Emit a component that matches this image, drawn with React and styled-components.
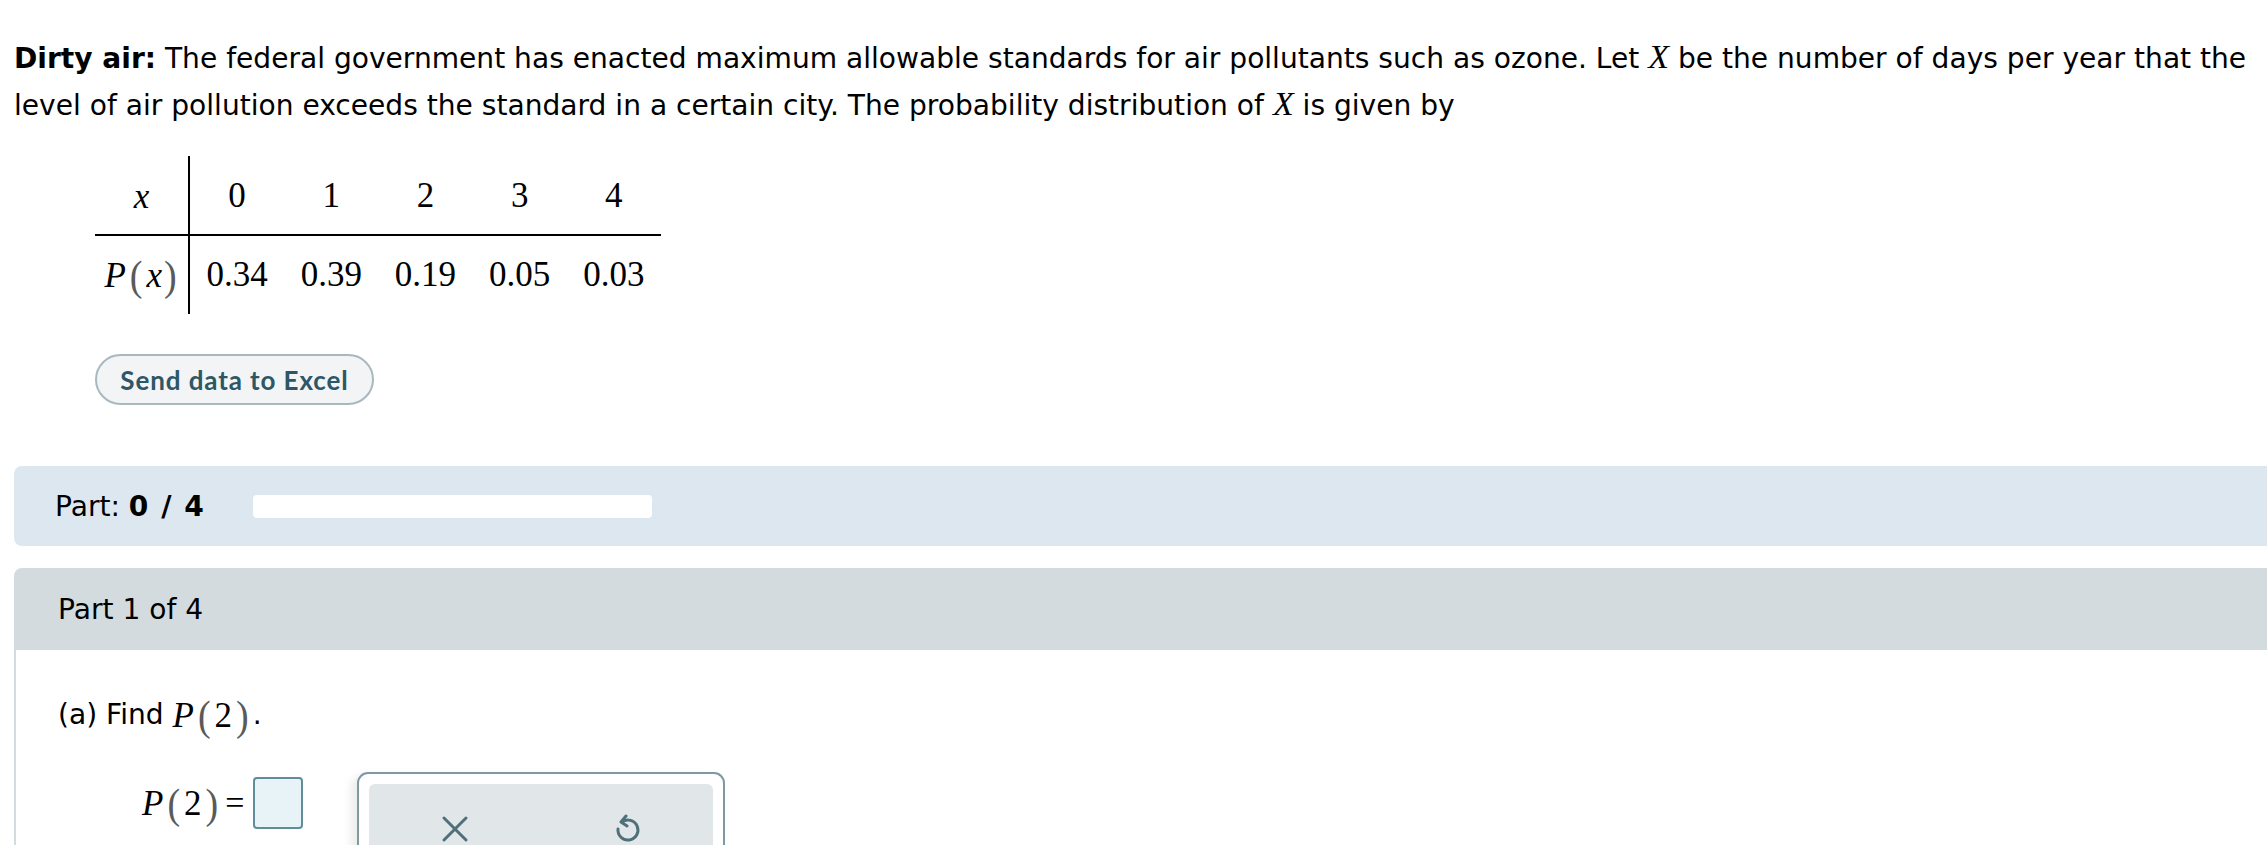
import React from "react";
import styled, { createGlobalStyle } from "styled-components";

const Global = createGlobalStyle`
  html, body { margin: 0; padding: 0; background: #fff; overflow: hidden; }
  body { font-family: "DejaVu Sans", Verdana, sans-serif; color: #000; }
`;

const Page = styled.div`
  padding: 35px 0 0 14px;
  width: 2267px;
  box-sizing: border-box;
`;

const Intro = styled.p`
  margin: 0;
  padding-right: 0;
  font-size: 28.1px;
  line-height: 47px;
`;

const Serif = styled.span`
  font-family: "Liberation Serif", "Times New Roman", serif;
  font-style: ${(p) => (p.$italic ? "italic" : "normal")};
  font-size: ${(p) => p.$size || 34}px;
  line-height: 1;
`;

const Paren = styled.span`
  font-family: "Liberation Serif", serif;
  font-style: normal;
  color: #5a5a5a;
  font-size: ${(p) => p.$size || 36}px;
  line-height: 1;
  display: inline-block;
  transform: scaleY(1.12);
  margin: 0 ${(p) => (p.$gap != null ? p.$gap : 3)}px;
`;

const TableWrap = styled.div`
  margin: 27px 0 0 81px;
  display: grid;
  grid-template-columns: 95px repeat(5, 94.2px);
  width: max-content;
`;

const Cell = styled.div`
  height: ${(p) => (p.$top ? 80 : 78)}px;
  display: flex;
  align-items: center;
  justify-content: center;
  font-family: "Liberation Serif", "Times New Roman", serif;
  font-size: 35px;
  box-sizing: border-box;
  border-right: ${(p) => (p.$head ? "2px solid #000" : "none")};
  border-bottom: ${(p) => (p.$top ? "2px solid #000" : "none")};
  padding-top: ${(p) => (p.$top ? 2 : 0)}px;
`;

const Button = styled.button`
  margin: 40px 0 0 81px;
  width: 279px;
  height: 51px;
  border-radius: 26px;
  border: 2px solid #a9b8bf;
  background: #f2f4f6;
  color: #2e5766;
  font-family: Lato, "Open Sans", sans-serif;
  font-weight: 700;
  font-size: 26px;
  letter-spacing: 0.9px;
  padding: 0;
  display: block;
`;

const PartBar = styled.div`
  margin-top: 61px;
  height: 80px;
  background: #dde7ef;
  border-radius: 8px 0 0 8px;
  display: flex;
  align-items: center;
  padding-left: 41px;
  font-size: 28.1px;
`;

const PartLabel = styled.span`
  width: 198px;
  white-space: nowrap;
`;

const PartCount = styled.b`
  letter-spacing: 1.5px;
`;

const Progress = styled.div`
  width: 399px;
  height: 23px;
  background: #fff;
  border-radius: 4px;
`;

const Section = styled.div`
  margin-top: 22px;
`;

const SectionHead = styled.div`
  height: 82px;
  background: #d3dbde;
  border-radius: 8px 0 0 0;
  display: flex;
  align-items: center;
  padding-left: 44px;
  font-size: 28.1px;
`;

const SectionBody = styled.div`
  border-left: 2px solid #d3dbde;
  padding: 40px 0 0 42px;
  height: 300px;
`;

const Question = styled.div`
  font-size: 28.1px;
  line-height: 50px;
  height: 50px;
  display: flex;
  align-items: center;
  white-space: pre;
`;

const AnswerRow = styled.div`
  margin-top: 32px;
  display: flex;
  align-items: flex-start;
`;

const Equation = styled.div`
  margin: 5px 0 0 84px;
  display: flex;
  align-items: center;
  height: 52px;
`;

const Equals = styled.span`
  font-family: "Liberation Serif", serif;
  font-size: 34px;
  margin-left: 3px;
`;

const Input = styled.div`
  margin-left: 9px;
  width: 50px;
  height: 52px;
  box-sizing: border-box;
  border: 2px solid #5f8e9a;
  background: #e8f3f8;
  border-radius: 4px;
`;

const Keypad = styled.div`
  margin-left: 54px;
  width: 368px;
  height: 120px;
  box-sizing: border-box;
  border: 2px solid #7f98a1;
  border-radius: 11px;
  padding: 10px;
  background: #fff;
  box-shadow: -6px 4px 10px rgba(0, 0, 0, 0.08);
`;

const KeyTray = styled.div`
  height: 100px;
  background: #e1e6e9;
  border-radius: 6px;
  display: flex;
  align-items: flex-start;
  padding-top: 30px;
  box-sizing: border-box;
`;

const KeyIcon = styled.div`
  width: 30px;
  height: 30px;
  margin-left: ${(p) => p.$ml}px;
  display: flex;
`;

function XIcon() {
  return (
    <svg width="30" height="30" viewBox="0 0 30 30">
      <path d="M4 4 L26 26 M26 4 L4 26" stroke="#4f6f79" strokeWidth="3" strokeLinecap="round" fill="none" />
    </svg>
  );
}

function UndoIcon() {
  return (
    <svg width="30" height="30" viewBox="0 0 30 30">
      <path d="M11 8 A10 10 0 1 1 7 15" stroke="#4f6f79" strokeWidth="3" strokeLinecap="round" fill="none" />
      <path d="M15 2 L10 8 L16 12" stroke="#4f6f79" strokeWidth="3" strokeLinecap="round" strokeLinejoin="round" fill="none" />
    </svg>
  );
}

function PofTwo() {
  return (
    <>
      <Serif $italic $size={35}>P</Serif>
      <Paren $size={38} $gap={4}>(</Paren>
      <Serif $size={35}>2</Serif>
      <Paren $size={38} $gap={4}>)</Paren>
    </>
  );
}

const xs = ["0", "1", "2", "3", "4"];
const ps = ["0.34", "0.39", "0.19", "0.05", "0.03"];

export default function App() {
  return (
    <>
      <Global />
      <Page>
        <Intro>
          <b>Dirty air:</b> The federal government has enacted maximum allowable standards for air pollutants such as
          ozone. Let <Serif $italic $size={34}>X</Serif> be the number of days per year that the level of air pollution
          exceeds the standard in a certain city. The probability distribution of <Serif $italic $size={34}>X</Serif> is
          given by
        </Intro>

        <TableWrap>
          <Cell $top $head>
            <Serif $italic $size={35}>x</Serif>
          </Cell>
          {xs.map((v) => (
            <Cell $top key={v}>{v}</Cell>
          ))}
          <Cell $head>
            <Serif $italic $size={35}>P</Serif>
            <Paren $size={38} $gap={4}>(</Paren>
            <Serif $italic $size={35}>x</Serif>
            <Paren $size={38} $gap={2}>)</Paren>
          </Cell>
          {ps.map((v) => (
            <Cell key={v}>{v}</Cell>
          ))}
        </TableWrap>

        <Button>Send data to Excel</Button>

        <PartBar>
          <PartLabel>
            Part: <PartCount>0 / 4</PartCount>
          </PartLabel>
          <Progress />
        </PartBar>

        <Section>
          <SectionHead>Part 1 of 4</SectionHead>
          <SectionBody>
            <Question>
              {"(a) Find "}
              <PofTwo />.
            </Question>
            <AnswerRow>
              <Equation>
                <PofTwo />
                <Equals>=</Equals>
                <Input />
              </Equation>
              <Keypad>
                <KeyTray>
                  <KeyIcon $ml={71}>
                    <XIcon />
                  </KeyIcon>
                  <KeyIcon $ml={141}>
                    <UndoIcon />
                  </KeyIcon>
                </KeyTray>
              </Keypad>
            </AnswerRow>
          </SectionBody>
        </Section>
      </Page>
    </>
  );
}
